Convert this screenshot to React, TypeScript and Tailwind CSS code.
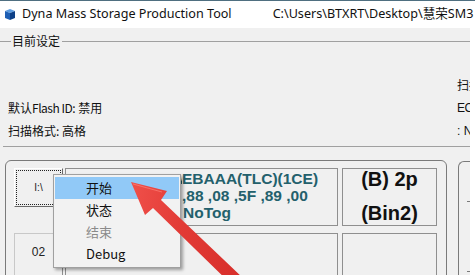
import React from "react";

const cjk = { fontFamily: '"Noto Sans CJK SC", "Noto Sans", sans-serif' };
const ui = { fontFamily: '"Noto Sans", "Noto Sans CJK SC", sans-serif' };
const arial = { fontFamily: '"Liberation Sans", Arial, sans-serif' };

function CubeIcon() {
  return (
    <svg width="12" height="13" viewBox="0 0 12 13">
      <polygon points="1,3 6,1 11,3 6,5" fill="#5b9be0" />
      <polygon points="1,3 6,5 6,12 1,10" fill="#1f5fb4" />
      <polygon points="6,5 11,3 11,10 6,12" fill="#0d3f86" />
    </svg>
  );
}

function Arrow() {
  return (
    <svg
      className="absolute left-0 top-0 pointer-events-none"
      width="475"
      height="275"
      viewBox="0 0 475 275"
    >
      <defs>
        <linearGradient id="ag" x1="0" y1="0" x2="1" y2="0.2">
          <stop offset="0" stopColor="#f0504a" />
          <stop offset="0.5" stopColor="#e23b36" />
          <stop offset="1" stopColor="#d9302c" />
        </linearGradient>
      </defs>
      <polygon
        points="131,182 167,191 161,200 244,279 235,288 153,208 145,215"
        fill="url(#ag)"
      />
      <polyline
        points="133,184 162,192"
        stroke="#ff8a80"
        strokeWidth="1"
        fill="none"
        opacity="0.6"
      />
    </svg>
  );
}

function Menu() {
  const items: { label: string; disabled?: boolean; active?: boolean }[] = [
    { label: "开始", active: true },
    { label: "状态" },
    { label: "结束", disabled: true },
    { label: "Debug" },
  ];
  return (
    <div
      className="absolute left-[53px] top-[174px] w-[128px] bg-[#f2f2f2] border border-[#a0a0a0] pt-[2px] pb-[2px] shadow-[2px_2px_3px_rgba(0,0,0,0.35)]"
      style={cjk}
    >
      {items.map((it) => (
        <div
          key={it.label}
          className={
            "mx-[1px] h-[22px] flex items-center pl-[31px] text-[13px] " +
            (it.active ? "bg-[#91c9f7] " : "") +
            (it.disabled ? "text-[#8a8a8a]" : "text-[#111]")
          }
        >
          {it.label}
        </div>
      ))}
    </div>
  );
}

export default function App() {
  return (
    <div className="relative w-[475px] h-[275px] overflow-hidden bg-white">
      {/* title bar */}
      <div className="h-[28px] bg-white border-t border-[#4f6f80] flex items-center text-[12.6px] text-[#111] overflow-hidden" style={ui}>
        <div className="ml-[4px] mr-[6px] flex items-center">
          <CubeIcon />
        </div>
        <span className="whitespace-nowrap">Dyna Mass Storage Production Tool</span>
        <span className="ml-[41px] whitespace-nowrap">C:\Users\BTXRT\Desktop\慧荣SM3</span>
      </div>

      <div className="flex h-[247px]">
        <div className="w-[470px] shrink-0 bg-[#f0f0f0] overflow-hidden">
          {/* group label */}
          <div className="mt-[5px] h-[16px] flex items-center">
            <div className="w-[11px] h-px bg-[#a0a0a0]" />
            <span className="text-[12px] leading-[16px] text-[#111] px-[1px]" style={cjk}>目前设定</span>
            <div className="flex-1 h-px bg-[#a0a0a0] ml-[1px]" />
          </div>

          <div className="mt-[28px] flex">
            <div className="flex-1 pl-[8px] pt-[23px] flex flex-col gap-[7px] text-[12px] leading-[16px] text-[#111]" style={cjk}>
              <div className="whitespace-nowrap">默认<span className="tracking-[-0.5px]">Flash ID</span>: 禁用</div>
              <div className="whitespace-nowrap">扫描格式: 高格</div>
            </div>
            <div className="w-[13px] flex flex-col gap-[7px] text-[12px] leading-[16px] text-[#111] overflow-hidden" style={cjk}>
              <div className="whitespace-nowrap">扫描</div>
              <div className="whitespace-nowrap tracking-[-0.5px]" style={arial}>EC</div>
              <div className="whitespace-nowrap" style={arial}>: N</div>
            </div>
          </div>

          <div className="mt-[7px] ml-[3px] h-px bg-[#a0a0a0]" />

          {/* panels */}
          <div className="mt-[13px] flex">
            <div className="ml-[5px] w-[442px] h-[140px] shrink-0 border border-[#7a7a7a] rounded-[6px] pl-[8px] pt-[7px]">
              <div className="grid grid-cols-[49px_273px_97px] gap-x-[2px] gap-y-[7px] [&>*:nth-child(3n)]:ml-[2px]">
                {/* row 1 */}
                <div className="h-[58px]">
                  <div className="h-[39px] border border-t-white border-l-white border-b-[#696969] border-r-[#696969] bg-[#f0f0f0] p-[1px]">
                    <div className="h-full border border-dotted border-[#222] flex items-center justify-center text-[10px] text-[#222]" style={arial}>
                      I:\
                    </div>
                  </div>
                </div>
                <div className="h-[58px] border border-[#8f8f8f] pt-[1px] text-[15.5px] leading-[17px] font-bold text-[#23606c] overflow-hidden" style={arial}>
                  <div className="flex whitespace-nowrap">
                    <span className="w-[116px] shrink-0 overflow-hidden pl-[14px]">MT29F1T08EMLC</span>
                    <span>EBAAA(TLC)(1CE)</span>
                  </div>
                  <div className="flex whitespace-nowrap">
                    <span className="w-[116px] shrink-0 overflow-hidden pl-[14px]">ID: 2C</span>
                    <span>,88 ,08 ,5F ,89 ,00</span>
                  </div>
                  <div className="flex whitespace-nowrap">
                    <span className="w-[117px] shrink-0 overflow-hidden pl-[14px]">Mode</span>
                    <span>NoTog</span>
                  </div>
                </div>
                <div className="h-[58px] border border-[#8f8f8f] flex flex-col items-center text-[20px] leading-[20px] font-bold text-[#111]" style={arial}>
                  <div className="mt-[0px] whitespace-nowrap">(B) 2p</div>
                  <div className="mt-[14px] whitespace-nowrap">(Bin2)</div>
                </div>
                {/* row 2 */}
                <div className="h-[50px] border border-t-[#c8c8c8] border-l-[#c8c8c8] border-b-[#8f8f8f] border-r-[#8f8f8f] bg-[#f0f0f0] pt-[9px] flex justify-center text-[12px] text-[#222]" style={arial}>
                  02
                </div>
                <div className="h-[50px] border border-[#8f8f8f]" />
                <div className="h-[50px] border border-[#8f8f8f]" />
              </div>
            </div>
            <div className="ml-[11px] mt-[1px] w-[40px] h-[140px] shrink-0 border-l border-t border-[#7a7a7a] rounded-tl-[6px] relative">
              <div className="absolute left-[8px] top-[39px] w-[4px] h-px bg-[#7a7a7a]" />
              <div className="absolute left-[8px] top-[109px] w-[4px] h-px bg-[#7a7a7a]" />
            </div>
          </div>
        </div>
        <div className="flex-1 bg-white" />
      </div>

      <Menu />
      <Arrow />
    </div>
  );
}
